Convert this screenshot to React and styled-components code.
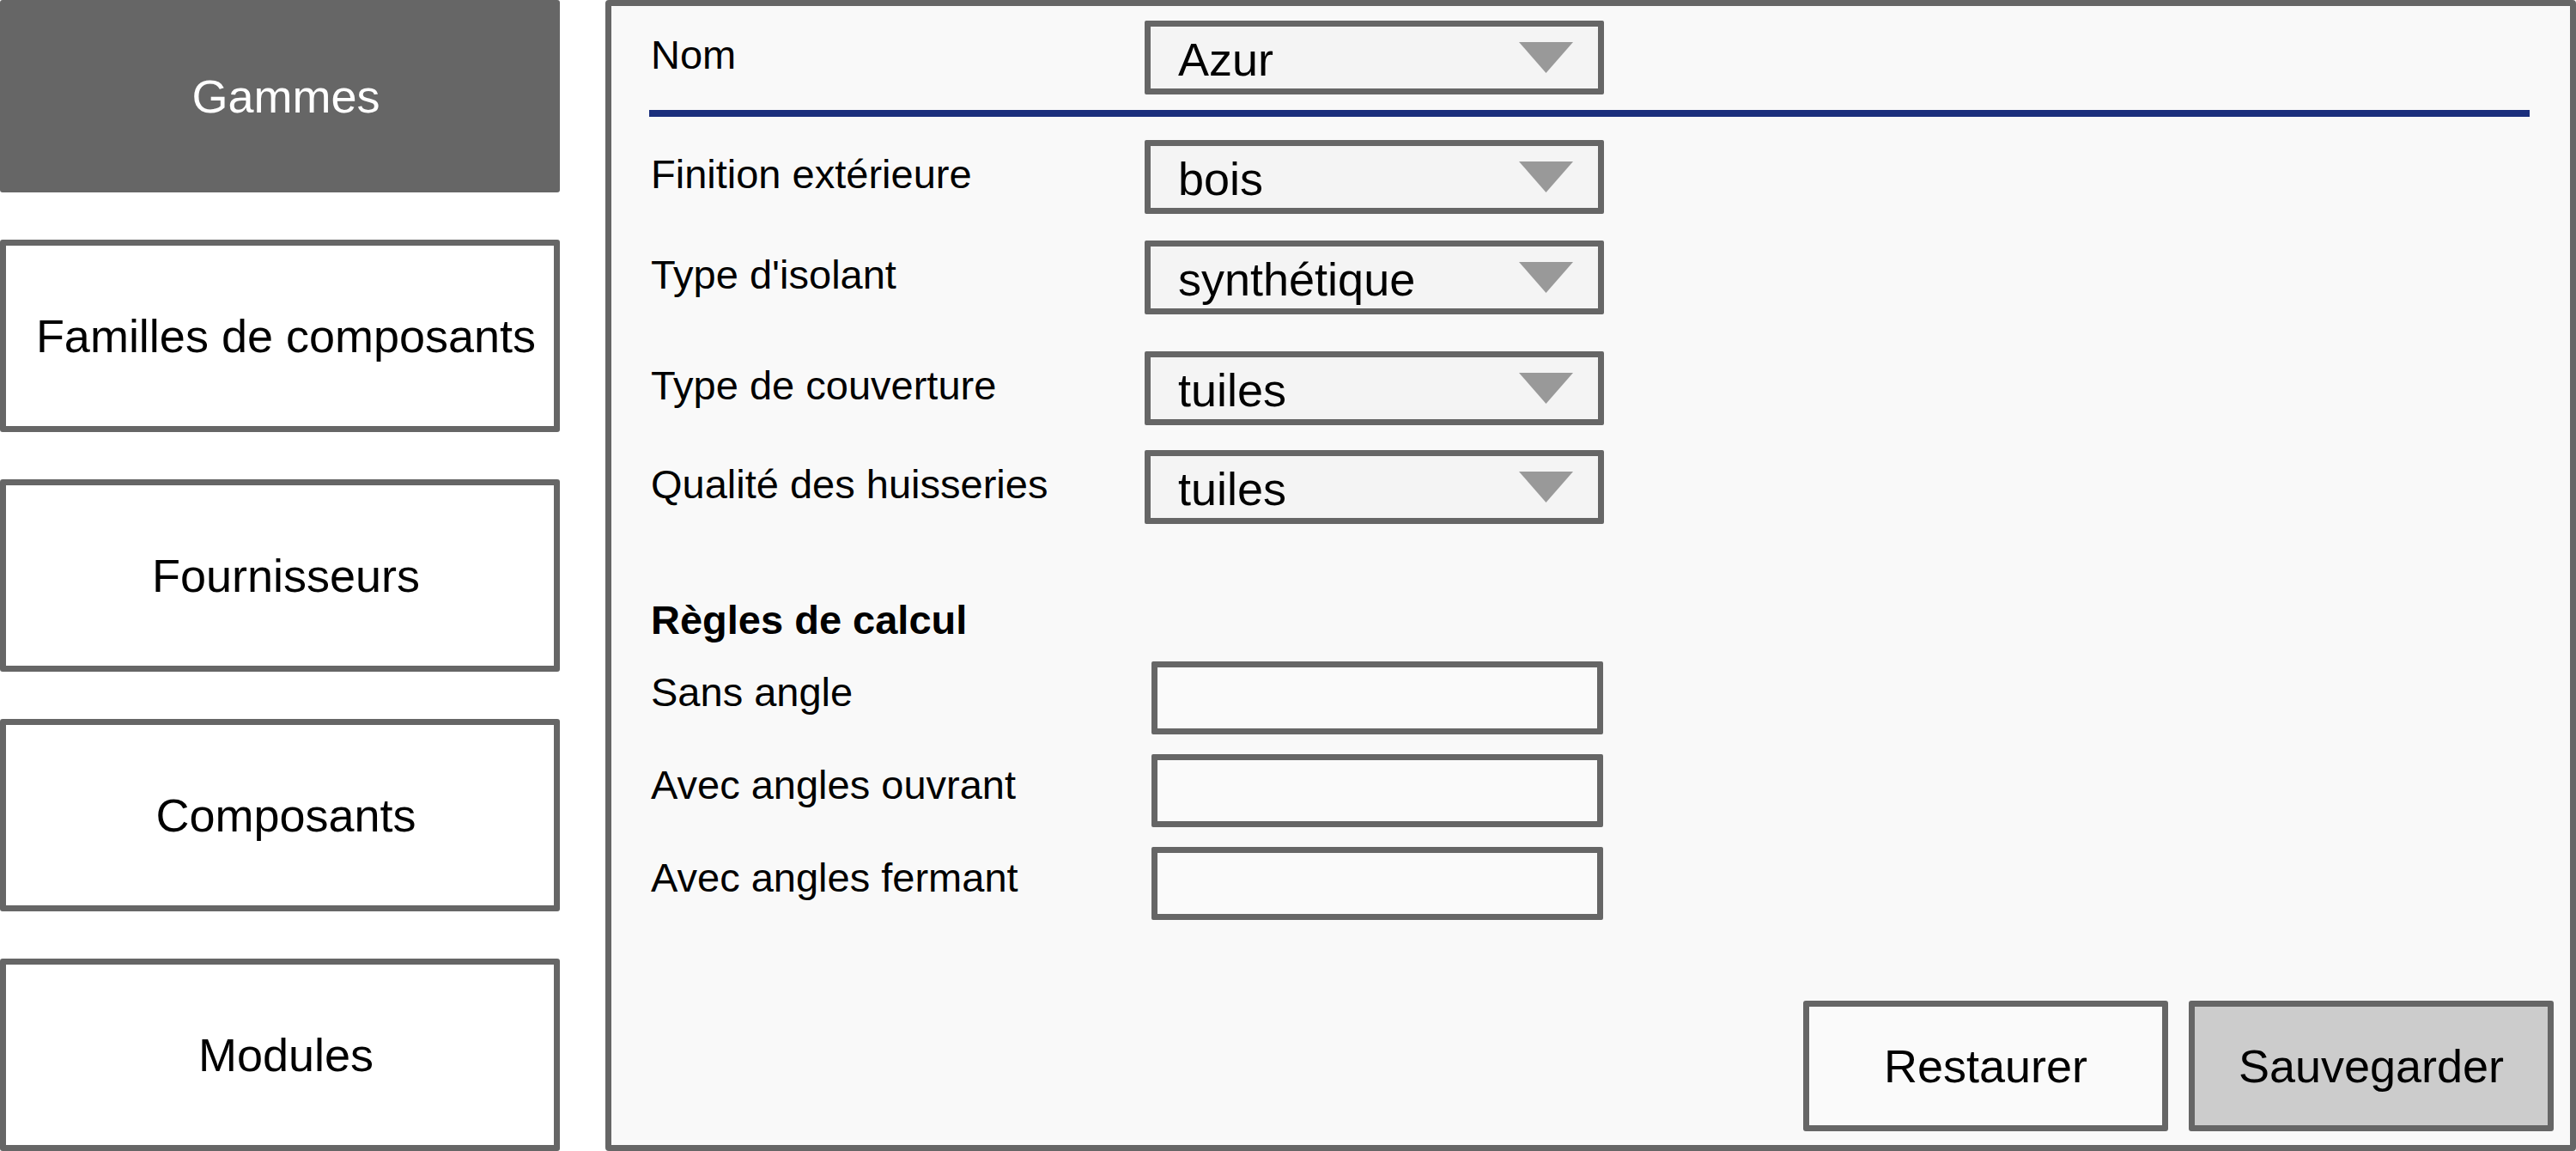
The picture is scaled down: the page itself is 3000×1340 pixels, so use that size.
import styled, { createGlobalStyle } from 'styled-components';

const GlobalStyle = createGlobalStyle`
	html, body {
		margin: 0;
		padding: 0;
		overflow: hidden;
	}
	body {
		font-family: 'Liberation Sans', Arial, sans-serif;
		background: #fff;
		color: #000;
	}
`;

const Page = styled.div`
	display: flex;
	gap: 53px;
	width: 3000px;
	height: 1340px;
`;

const Sidebar = styled.nav`
	width: 652px;
	flex-shrink: 0;
	display: flex;
	flex-direction: column;
	justify-content: space-between;
`;

const NavButton = styled.div`
	height: 224px;
	box-sizing: border-box;
	border: 7px solid #666;
	border-radius: 3px;
	background: ${(p) => (p.$active ? '#666' : '#fff')};
	color: ${(p) => (p.$active ? '#fff' : '#000')};
	display: flex;
	align-items: center;
	justify-content: center;
	padding-left: 14px;
	font-size: 54px;
`;

const Panel = styled.main`
	flex: 1;
	box-sizing: border-box;
	border: 7px solid #666;
	border-radius: 4px;
	background: #f9f9f9;
	display: flex;
	flex-direction: column;
	padding: 17px 19px 16px 46px;
`;

const Row = styled.div`
	display: flex;
	align-items: flex-start;
	margin-top: ${(p) => p.$gap || 0}px;
`;

const Label = styled.div`
	width: ${(p) => p.$width}px;
	flex-shrink: 0;
	font-size: 47px;
	padding-top: ${(p) => p.$offset ?? 12}px;
`;

const Divider = styled.div`
	height: 8px;
	margin: 18px 28px 0 -2px;
	background: #1b2f7d;
`;

const Select = styled.div`
	width: 535px;
	height: 86px;
	box-sizing: border-box;
	border: 7px solid #666;
	border-radius: 2px;
	background: #f4f4f4;
	display: flex;
	align-items: center;
	justify-content: space-between;
	padding: 4px 29px 0 32px;
	font-size: 54px;
`;

const Arrow = styled.svg`
	width: 63px;
	height: 36px;
	margin-top: -4px;
	flex-shrink: 0;
`;

const Heading = styled.div`
	font-size: 47px;
	font-weight: 700;
	margin-top: 84px;
`;

const TextInput = styled.input`
	width: 526px;
	height: 85px;
	box-sizing: border-box;
	border: 7px solid #666;
	border-radius: 2px;
	background: #fafafa;
	padding: 0 20px;
	font: inherit;
	font-size: 54px;
	outline: none;
`;

const Actions = styled.div`
	margin-top: auto;
	display: flex;
	justify-content: flex-end;
	gap: 24px;
`;

const ActionButton = styled.button`
	width: 425px;
	height: 152px;
	box-sizing: border-box;
	border: 7px solid #666;
	border-radius: 3px;
	background: ${(p) => (p.$primary ? '#ccc' : '#fafafa')};
	font-family: inherit;
	font-size: 54px;
	color: #000;
	padding: 0;
`;

const navItems = [
	'Gammes',
	'Familles de composants',
	'Fournisseurs',
	'Composants',
	'Modules',
];

const selects = [
	{ label: 'Finition extérieure', value: 'bois', gap: 27 },
	{ label: "Type d'isolant", value: 'synthétique', gap: 31 },
	{ label: 'Type de couverture', value: 'tuiles', gap: 43 },
	{ label: 'Qualité des huisseries', value: 'tuiles', gap: 29 },
];

const rules = [
	{ label: 'Sans angle', gap: 21 },
	{ label: 'Avec angles ouvrant', gap: 23 },
	{ label: 'Avec angles fermant', gap: 23 },
];

function Dropdown({ value }) {
	return (
		<Select>
			<span>{value}</span>
			<Arrow viewBox='0 0 63 36'>
				<polygon points='0,0 63,0 31.5,36' fill='#999' />
			</Arrow>
		</Select>
	);
}

export default function App() {
	return (
		<>
			<GlobalStyle />
			<Page>
				<Sidebar>
					{navItems.map((item, i) => (
						<NavButton key={item} $active={i === 0}>
							{item}
						</NavButton>
					))}
				</Sidebar>
				<Panel>
					<Row>
						<Label $width={575}>Nom</Label>
						<Dropdown value='Azur' />
					</Row>
					<Divider />
					{selects.map((s) => (
						<Row key={s.label} $gap={s.gap}>
							<Label $width={575}>{s.label}</Label>
							<Dropdown value={s.value} />
						</Row>
					))}
					<Heading>Règles de calcul</Heading>
					{rules.map((r) => (
						<Row key={r.label} $gap={r.gap}>
							<Label $width={583} $offset={8}>
								{r.label}
							</Label>
							<TextInput readOnly />
						</Row>
					))}
					<Actions>
						<ActionButton>Restaurer</ActionButton>
						<ActionButton $primary>Sauvegarder</ActionButton>
					</Actions>
				</Panel>
			</Page>
		</>
	);
}
